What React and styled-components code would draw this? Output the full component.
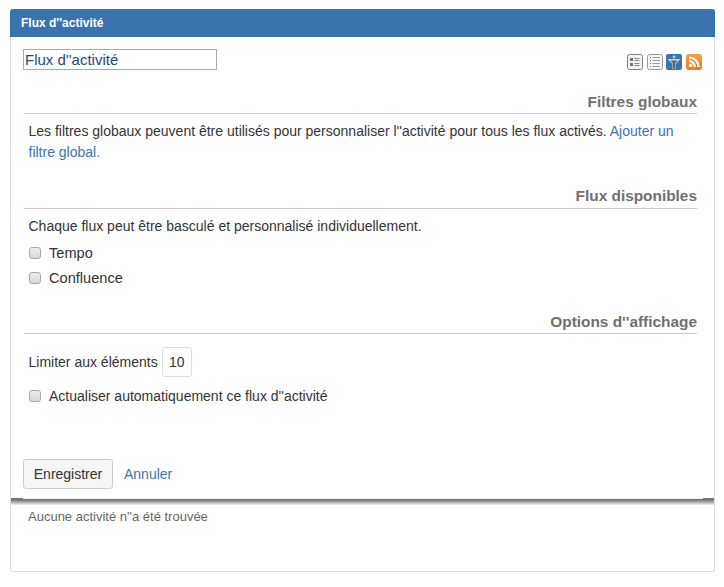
import styled, { createGlobalStyle } from "styled-components";

const GlobalStyle = createGlobalStyle`
    html, body {
        margin: 0;
        padding: 0;
        background: #fff;
    }
    body {
        font-family: "Liberation Sans", Arial, sans-serif;
        font-size: 14px;
        line-height: 20px;
        color: #333;
    }
`;

const Page = styled.div`
    width: 724px;
    height: 587px;
    padding: 9px 10px 0;
    box-sizing: border-box;
`;

const Panel = styled.div`
    width: 705px;
    height: 563px;
    box-sizing: border-box;
    border: 1px solid #ddd;
    border-top: none;
    border-radius: 3px;
    display: flex;
    flex-direction: column;
`;

const Header = styled.div`
    height: 28px;
    margin: 0 -1px;
    padding-left: 11px;
    background: #3b73af;
    color: #fff;
    font-size: 12px;
    font-weight: bold;
    line-height: 28px;
    border-radius: 3px 3px 0 0;
`;

const Form = styled.div`
    height: 461px;
    box-sizing: border-box;
    padding: 12px 17px 0 12px;
    display: flex;
    flex-direction: column;
`;

const TitleRow = styled.div`
    display: flex;
    justify-content: space-between;
    align-items: flex-start;
`;

const TitleInput = styled.input`
    width: 194px;
    height: 21px;
    box-sizing: border-box;
    padding: 0 1px;
    border: 1px solid #aaa;
    font: 15px/19px "Liberation Sans", Arial, sans-serif;
    color: #1f4a7c;
    outline: none;
`;

const Icons = styled.div`
    display: flex;
    gap: 3.6px;
    margin: 5px -5px 0 0;
`;

const IconBox = styled.svg`
    width: 16px;
    height: 16px;
    display: block;
`;

const SectionTitle = styled.h3`
    margin: ${(p) => p.$top}px 0 0 1px;
    height: 24px;
    box-sizing: border-box;
    border-bottom: 1px solid #ccc;
    font-size: 15.4px;
    line-height: ${(p) => p.$line || 24}px;
    font-weight: bold;
    color: #707070;
    text-align: right;
`;

const Text = styled.p`
    margin: ${(p) => p.$top}px 0 0 5.5px;
    line-height: 21px;
`;

const Link = styled.a`
    color: #3b73af;
    text-decoration: none;
`;

const CheckRow = styled.label`
    display: flex;
    align-items: center;
    height: 25px;
    margin-left: 6px;
    margin-top: ${(p) => p.$top || 0}px;
    font-size: ${(p) => p.$size || 14}px;
`;

const Box = styled.span`
    width: 12px;
    height: 12px;
    box-sizing: border-box;
    border: 1px solid #aaa;
    border-radius: 3px;
    background: linear-gradient(#ececec, #d8d8d8);
    margin-right: 8px;
    flex: none;
`;

const LimitRow = styled.div`
    display: flex;
    align-items: center;
    margin: 13px 0 0 5.5px;
    height: 30px;
`;

const LimitInput = styled.span`
    width: 30px;
    height: 30px;
    box-sizing: border-box;
    margin-left: 4px;
    border: 1px solid #ddd;
    border-radius: 3px;
    text-align: center;
    line-height: 28px;
`;

const Buttons = styled.div`
    margin-top: auto;
    display: flex;
    align-items: center;
    gap: 11px;
    height: 30px;
    padding-bottom: 9px;
`;

const SaveButton = styled.button`
    width: 90px;
    height: 30px;
    padding: 0;
    background: #f5f5f5;
    border: 1px solid #ccc;
    border-radius: 3px;
    color: #333;
    font: 14px "Liberation Sans", Arial, sans-serif;
`;

const Shadow = styled.div`
    height: 7px;
    flex: none;
    background:
        linear-gradient(#ececec, #ececec) 12px 0 / calc(100% - 23px) 1px no-repeat,
        linear-gradient(#777, #777 2px, #f0f0f0);
`;

const Empty = styled.div`
    padding: 2px 17px;
    font-size: 13px;
    color: #666;
`;

function ListIcon() {
    return (
        <IconBox viewBox="0 0 16 16">
            <rect x="0.5" y="0.5" width="15" height="15" rx="2" fill="#f2f2f2" stroke="#808080" />
            <path d="M3 4h3v3H3zM3 9h3v3H3z" fill="#777" />
            <path d="M7.5 4.5h5M7.5 6.5h5M7.5 9.5h5M7.5 11.5h5" stroke="#888" strokeWidth="1" />
        </IconBox>
    );
}

function LinesIcon() {
    return (
        <IconBox viewBox="0 0 16 16">
            <rect x="0.5" y="0.5" width="15" height="15" rx="2" fill="#f6f6f6" stroke="#999" />
            <path d="M3 3.5h1M3 6.5h1M3 9.5h1M3 12.5h1" stroke="#777" />
            <path d="M5.5 3.5h7.5M5.5 6.5h7.5M5.5 9.5h7.5M5.5 12.5h7.5" stroke="#999" />
        </IconBox>
    );
}

function FilterIcon() {
    return (
        <IconBox viewBox="0 0 16 16">
            <rect width="16" height="16" rx="2" fill="#3b73af" />
            <circle cx="8" cy="2.8" r="1.4" fill="#c9d6e4" />
            <path d="M1.5 5h13L9.5 10v5h-3v-5z" fill="#d4d7da" />
            <path d="M4.5 6.5h7L9 9.5v5H7v-5z" fill="#5b6670" />
        </IconBox>
    );
}

function RssIcon() {
    return (
        <IconBox viewBox="0 0 16 16">
            <defs>
                <linearGradient id="rssFill" x1="0" y1="0" x2="0" y2="1">
                    <stop offset="0" stopColor="#f2a04e" />
                    <stop offset="1" stopColor="#e67e22" />
                </linearGradient>
            </defs>
            <rect width="16" height="16" rx="3" fill="url(#rssFill)" />
            <circle cx="4.5" cy="11.5" r="1.8" fill="#fff" />
            <path d="M3 7.2a5.8 5.8 0 0 1 5.8 5.8M3 3.5A9.5 9.5 0 0 1 12.5 13" fill="none" stroke="#fff" strokeWidth="2.2" />
        </IconBox>
    );
}

export default function App() {
    return (
        <>
            <GlobalStyle />
            <Page>
                <Panel>
                    <Header>Flux d''activité</Header>
                    <Form>
                        <TitleRow>
                            <TitleInput defaultValue="Flux d''activité" />
                            <Icons>
                                <ListIcon />
                                <LinesIcon />
                                <FilterIcon />
                                <RssIcon />
                            </Icons>
                        </TitleRow>
                        <SectionTitle $top={20}>Filtres globaux</SectionTitle>
                        <Text $top={7}>
                            Les filtres globaux peuvent être utilisés pour personnaliser l''activité pour tous les flux activés. <Link href="#">Ajouter un filtre global.</Link>
                        </Text>
                        <SectionTitle $top={22} $line={22}>Flux disponibles</SectionTitle>
                        <Text $top={7}>Chaque flux peut être basculé et personnalisé individuellement.</Text>
                        <CheckRow $top={3} $size={14.6}><Box />Tempo</CheckRow>
                        <CheckRow $size={14.6}><Box />Confluence</CheckRow>
                        <SectionTitle $top={20}>Options d''affichage</SectionTitle>
                        <LimitRow>Limiter aux éléments<LimitInput>10</LimitInput></LimitRow>
                        <CheckRow $top={6}><Box />Actualiser automatiquement ce flux d''activité</CheckRow>
                        <Buttons>
                            <SaveButton>Enregistrer</SaveButton>
                            <Link href="#">Annuler</Link>
                        </Buttons>
                    </Form>
                    <Shadow />
                    <Empty>Aucune activité n''a été trouvée</Empty>
                </Panel>
            </Page>
        </>
    );
}
